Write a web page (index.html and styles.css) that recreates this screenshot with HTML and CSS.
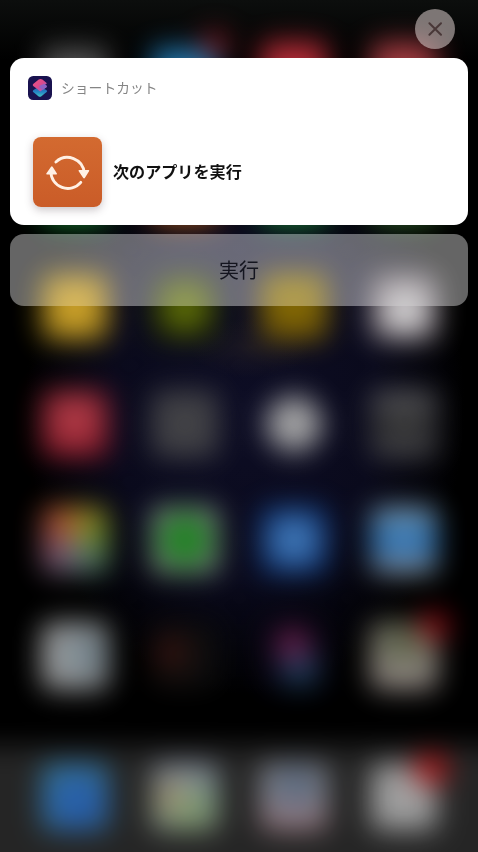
FILE: index.html
```html
<!DOCTYPE html>
<html lang="ja">
<head>
<meta charset="utf-8">
<title>ショートカット</title>
<link rel="stylesheet" href="styles.css">
</head>
<body>
<main class="screen">
  <div class="wallpaper" aria-hidden="true">
    <div class="home">
      <div class="apps">
        <i class="app settings"></i><i class="app store"><b class="badge dim"></b></i><i class="app news"></i><i class="app mail"></i>
        <i class="app green"></i><i class="app orange"></i><i class="app green"></i><i class="app leaf"></i>
        <i class="app gold"></i><i class="app olive"></i><i class="app mustard"></i><i class="app slack"></i>
        <i class="app red"></i><i class="app slate"></i><i class="app disc"></i><i class="app printer"></i>
        <i class="app palette"></i><i class="app chat"></i><i class="app blue"></i><i class="app sky"></i>
        <i class="app files"></i><i class="app wallet"></i><i class="app shortcuts"></i><i class="app notes"><b class="badge"></b></i>
      </div>
      <div class="dock">
        <i class="app safari"></i><i class="app photos"></i><i class="app person"></i><i class="app inbox"><b class="badge bright"></b></i>
      </div>
    </div>
  </div>
  <div class="overlay">
    <button class="close" aria-label="閉じる">
      <svg width="16" height="16" viewBox="0 0 16 16"><path d="M2.4 2.2 14 13.8M14 2.2 2.4 13.8"/></svg>
    </button>
    <section class="card">
      <header class="source">
        <svg class="logo" width="24" height="24" viewBox="0 0 24 24">
          <defs>
            <linearGradient id="pink" x1="0" y1="0" x2="1" y2="1"><stop stop-color="#f5537f"/><stop offset=".5" stop-color="#d94a8e"/><stop offset="1" stop-color="#8d67c8"/></linearGradient>
            <linearGradient id="aqua" x1="0" y1="0" x2="0" y2="1"><stop stop-color="#2750a8"/><stop offset=".55" stop-color="#2585c4"/><stop offset="1" stop-color="#43c3c1"/></linearGradient>
          </defs>
          <rect width="24" height="24" rx="5.2" fill="#19124f"/>
          <path d="M5.2 14.2 11.8 10l6.8 4.2q1 .9 0 1.8l-5.5 4.4q-1.2.9-2.4 0L5.2 16q-.9-.9 0-1.8Z" fill="url(#aqua)"/>
          <path d="m10.7 3.6-5.5 4.4q-1 .9 0 1.9l4 3q1.8 1.5 3 2.7l5.9-4.3q1-.9 0-1.8l-1.2-1 1.5-.6q.7-.5-.1-1.2l-3.9-3.1q-1.8-1-3.7 0Z" fill="url(#pink)"/>
          <path d="m12.2 9.4 4.2-1.7 2.1 1.7q1 .9 0 1.8l-3.7 2.7-3.3-2.7q-.9-1 .7-1.8Z" fill="#8d62c4"/>
        </svg>
        <span>ショートカット</span>
      </header>
      <div class="content">
        <div class="tile">
          <svg width="69" height="69" viewBox="0 0 70 70">
            <path class="ring" d="M23.2 25.3A17.2 17.2 0 0 1 52 36.5M48.5 46A17.2 17.2 0 0 1 18.1 35"/>
            <path class="tip" d="m46.2 34.5 4.8 7.1q.8 1 1.6 0l4.4-7.1q.3-1-.7-1H47q-1 0-.8 1ZM13.5 37l4.8-6.7q.8-1 1.6 0l4.4 6.7q.4 1-.8 1h-9.2q-1.2 0-.8-1Z"/>
          </svg>
        </div>
        <h1>次のアプリを実行</h1>
      </div>
    </section>
    <button class="run">実行</button>
  </div>
</main>
</body>
</html>
```

FILE: styles.css
```css
* { box-sizing: border-box; }

body {
  margin: 0;
  background: #000;
  font-family: "Noto Sans CJK JP", sans-serif;
}

button { border: 0; padding: 0; font: inherit; }

.screen {
  display: grid;
  width: 478px;
  height: 852px;
  overflow: hidden;
}

.wallpaper, .overlay { grid-area: 1 / 1; min-width: 0; min-height: 0; }

.wallpaper {
  height: 852px;
  overflow: hidden;
  background:
    radial-gradient(ellipse 60px 30px at 250px 348px, rgba(40, 34, 36, .5) 0, rgba(40, 34, 36, 0) 100%),
    radial-gradient(ellipse 220px 290px at 245px 405px, #0d0d24 0, #0a0a1c 60%, rgba(10, 10, 28, 0) 100%),
    linear-gradient(#0c0e0d 0, #000 60px);
}

/* Extends past the screen edges so the blur stays solid there. */
.home {
  width: 538px;
  height: 920px;
  margin-left: -30px;
  padding-top: 42px;
  filter: blur(14px);
  opacity: .94;
}

.apps, .dock {
  display: grid;
  grid-template-columns: repeat(4, 66px);
  column-gap: 43.7px;
  padding-left: 72px;
}

.apps { grid-auto-rows: 66px; row-gap: 50.2px; height: 704px; }

.dock {
  height: 176px;
  padding-top: 18px;
  background: #282828;
}

.app { display: block; position: relative; height: 66px; border-radius: 9px; }

.settings { background: linear-gradient(transparent 6px, #5a5a5a 6px); }
.store { background: linear-gradient(transparent 6px, #2680b8 6px); }
.news { background: #c02f3b; }
.mail { background: #ad3f45; }
.green { background: #1b8b39; }
.orange { background: #a9581c; }
.leaf { background: #356b2f; }
.gold { background: radial-gradient(#dcae30 20%, #b38f19 80%); }
.olive { background: radial-gradient(circle, #6b7c08 25%, #303b03 60%, #080a02); }
.mustard { background: linear-gradient(#967b02, #7b5e04); }
.slack { background: radial-gradient(circle at 52% 55%, #e6e6e6 22%, #9c9298 60%, #6a5d61); }
.red { background: radial-gradient(circle at 50% 40%, #b9404b 20%, #92192a 80%); }
.slate { background: radial-gradient(#424245, #4a4a4d); }
.disc { margin: 5px; height: 56px; border-radius: 50%; background: #acacac; }
.printer { background: linear-gradient(#5a5a5c 25%, #232323 45%, #4a4a4c 80%); }
.palette { background: conic-gradient(#a88a2a 5%, #6f9426 20%, #548070 40%, #7c6080 60%, #904f5c 75%, #c2562a 92%, #a88a2a); }
.chat { background: radial-gradient(circle, #0e8412 25%, #428b43 48%, #a4aaa4 80%); }
.blue { background: radial-gradient(ellipse, #4782c2 25%, #103c82 75%); }
.sky { background: linear-gradient(#95adbc, #2c78bd 45%, #3a76b2 70%, #a8b0b6 95%); }
.files { background: radial-gradient(circle at 65% 48%, #6f8490 10%, #adadad 60%); }
.wallet { background: radial-gradient(circle at 28% 45%, #4d150f 0, #15100f 35%, #0e0e0e 70%); }
.shortcuts { background: radial-gradient(circle at 48% 33%, #a82e6c 0, rgba(60, 20, 60, 0) 42%), radial-gradient(circle at 58% 70%, #28648a 0, rgba(20, 40, 60, 0) 42%), #0a0718; }
.notes { background: radial-gradient(circle at 50% 30%, #556041 10%, #989189 55%, #aea09d); }
.safari { background: radial-gradient(circle at 55% 60%, #2961b4 25%, #3a85a8 80%); }
.photos { background: radial-gradient(circle at 28% 48%, #b58f66, rgba(165, 140, 107, 0) 38%), radial-gradient(circle at 58% 73%, #81a56c, rgba(129, 157, 113, 0) 50%), linear-gradient(#8c90a6, #84a090 50%, #9ba398); }
.person { background: radial-gradient(circle at 52% 34%, #5a6b84 15%, rgba(95, 109, 130, 0) 60%), linear-gradient(#9a9aa0 45%, #a0828a 85%); }
.inbox { background: #a8a8a8; }

.badge {
  position: absolute;
  top: -11px;
  right: -12px;
  width: 30px;
  height: 28px;
  border-radius: 50%;
  background: #980d14;
}
.badge.bright { width: 36px; height: 32px; background: #b01a1c; }
.badge.dim { background: #7c1e27; }

.overlay {
  position: relative;
  display: flex;
  flex-direction: column;
  padding: 9px 10px 0;
}

.close {
  display: grid;
  place-items: center;
  align-self: flex-end;
  width: 40px;
  height: 40px;
  margin: 0 13px 9px 0;
  border-radius: 50%;
  background: rgba(220, 208, 205, .55);
}
.close path { fill: none; stroke: #493838; stroke-width: 2; stroke-linecap: round; }

.card {
  height: 167px;
  padding: 18px 18px 0 17.5px;
  border-radius: 14px;
  background: #fff;
}

.source {
  display: flex;
  align-items: center;
  gap: 9.5px;
  height: 24px;
  color: #858585;
  font-size: 13.8px;
  line-height: 22px;
}
.source span { margin-top: -2px; }

.content {
  display: flex;
  align-items: center;
  gap: 11px;
  margin: 37px 0 0 5px;
}

.tile {
  width: 69.5px;
  height: 69.5px;
  border-radius: 8px;
  background: linear-gradient(#d36a30, #ca5c28);
  box-shadow: 0 3px 9px rgba(70, 50, 60, .28);
}
.tile svg { display: block; margin-top: -.5px; }
.ring { fill: none; stroke: #fff0e4; stroke-width: 2.9; stroke-linecap: round; }
.tip { fill: #fff0e4; }

.card h1 {
  margin: -2px 0 0;
  color: #111;
  font-size: 16.1px;
  font-weight: 700;
  line-height: 24px;
}

.run {
  height: 72px;
  margin-top: 9px;
  border-radius: 14px;
  background: rgba(255, 255, 255, .31);
  backdrop-filter: contrast(.75) saturate(1.5);
  color: #14151f;
  font-size: 20px;
  line-height: 72px;
}
```
